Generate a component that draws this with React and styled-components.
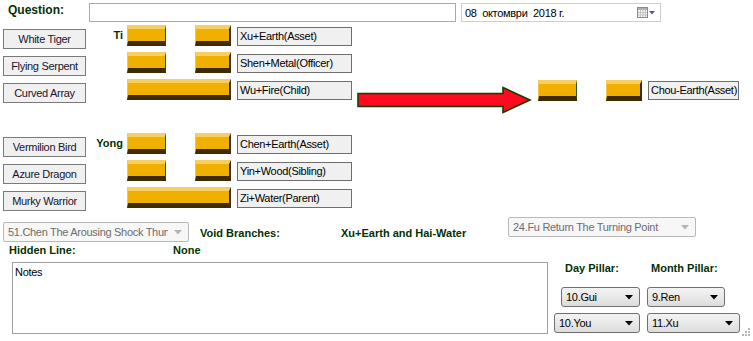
import React from 'react';
import styled, { createGlobalStyle } from 'styled-components';

const GlobalStyle = createGlobalStyle`
  html, body {
    margin: 0;
    padding: 0;
    background: #fff;
  }
  body {
    font-family: "Liberation Sans", Arial, sans-serif;
    font-size: 11px;
    letter-spacing: -0.3px;
    color: #000;
  }
`;

const upper = [
  { name: 'White Tiger', tag: 'Ti', yin: true, reading: 'Xu+Earth(Asset)' },
  { name: 'Flying Serpent', yin: true, reading: 'Shen+Metal(Officer)' },
  { name: 'Curved Array', yin: false, reading: 'Wu+Fire(Child)', moving: { yin: true, reading: 'Chou-Earth(Asset)' } },
];

const lower = [
  { name: 'Vermilion Bird', tag: 'Yong', yin: true, reading: 'Chen+Earth(Asset)' },
  { name: 'Azure Dragon', yin: true, reading: 'Yin+Wood(Sibling)' },
  { name: 'Murky Warrior', yin: false, reading: 'Zi+Water(Parent)' },
];

function Line({ yin }) {
  if (!yin) {
    return (
      <LineBar>
        <Segment $width={104} />
      </LineBar>
    );
  }
  return (
    <LineBar>
      <Segment $width={39} $edge />
      <Segment $width={36} />
    </LineBar>
  );
}

function Arrow() {
  return (
    <ArrowSvg width="175" height="31" viewBox="0 0 175 31">
      <polygon
        points="1,10.5 146,10.5 146,4.5 173,17 146,29.5 146,23.5 1,23.5"
        fill="#ff0a1e"
        stroke="#143c00"
        strokeWidth="1.6"
        strokeLinejoin="miter"
      />
    </ArrowSvg>
  );
}

function DropArrow({ disabled }) {
  return (
    <svg width="8" height="5" viewBox="0 0 8 5">
      <polygon points="0,0 8,0 4,4.5" fill={disabled ? '#b4b4b4' : '#000'} />
    </svg>
  );
}

function Combo({ text, width, disabled, top = 0 }) {
  return (
    <ComboBox $width={width} $disabled={disabled} $top={top}>
      <ComboText>{text}</ComboText>
      <DropArrow disabled={disabled} />
    </ComboBox>
  );
}

function Trigram({ lines, gap }) {
  return (
    <TrigramBlock $gap={gap}>
      {lines.map((l) => (
        <LineRow key={l.name}>
          <SideButton>{l.name}</SideButton>
          <PositionTag>{l.tag || ''}</PositionTag>
          <Line yin={l.yin} />
          <ReadingBox $width={115}>{l.reading}</ReadingBox>
          {l.moving && (
            <>
              <Arrow />
              <MovedLine>
                <Line yin={l.moving.yin} />
              </MovedLine>
              <ReadingBox $width={91}>{l.moving.reading}</ReadingBox>
            </>
          )}
        </LineRow>
      ))}
    </TrigramBlock>
  );
}

export default function App() {
  return (
    <Page>
      <GlobalStyle />
      <TopRow>
        <QuestionLabel>Question:</QuestionLabel>
        <QuestionInput />
        <DatePicker>
          <DateText>08  октомври  2018 г.</DateText>
          <CalendarIcon width="18" height="12" viewBox="0 0 18 12">
            <rect x="0.5" y="0.5" width="10" height="10" fill="#f4f4f4" stroke="#8a8a8a" />
            <rect x="1" y="1" width="9" height="2" fill="#b0b0b0" />
            <path d="M3.5 3v7M6 3v7M8.5 3v7M1 5.5h9M1 8h9" stroke="#c4c4c4" strokeWidth="1" />
            <polygon points="12,4 18,4 15,7.5" fill="#4b5d7e" />
          </CalendarIcon>
        </DatePicker>
      </TopRow>

      <Trigram lines={upper} gap={3} />
      <Trigram lines={lower} gap={27} />

      <InfoRow>
        <Combo text="51.Chen The Arousing Shock Thunder" width={186} disabled top={5} />
        <BoldText $width={141} $pad={11} $top={10}>Void Branches:</BoldText>
        <BoldText $width={167} $top={10}>Xu+Earth and Hai-Water</BoldText>
        <Combo text="24.Fu Return The Turning Point" width={188} disabled />
      </InfoRow>

      <LowerSection>
        <NotesColumn>
          <HiddenRow>
            <BoldText $width={164}>Hidden Line:</BoldText>
            <BoldText>None</BoldText>
          </HiddenRow>
          <Notes>Notes</Notes>
        </NotesColumn>
        <PillarPanel>
          <PillarLabel $pad={11}>Day Pillar:</PillarLabel>
          <PillarLabel $pad={4}>Month Pillar:</PillarLabel>
          <PillarCell $end><Combo text="10.Gui" width={79} /></PillarCell>
          <PillarCell><Combo text="9.Ren" width={78} /></PillarCell>
          <PillarCell $end><Combo text="10.You" width={86} /></PillarCell>
          <PillarCell><Combo text="11.Xu" width={93} /></PillarCell>
        </PillarPanel>
      </LowerSection>

      <SizeGrip width="8" height="8" viewBox="0 0 8 8">
        {[[6, 0], [6, 3], [3, 3], [6, 6], [3, 6], [0, 6]].map(([x, y]) => (
          <rect key={`${x}-${y}`} x={x} y={y} width="2" height="2" fill="#b8b8b8" />
        ))}
      </SizeGrip>
    </Page>
  );
}

const Page = styled.div`
  position: relative;
  width: 753px;
  height: 341px;
  overflow: hidden;
  background: #fff;
`;

const TopRow = styled.div`
  display: flex;
  align-items: flex-start;
  padding-top: 3px;
  height: 19px;
`;

const QuestionLabel = styled.div`
  width: 81px;
  padding-left: 8px;
  font-size: 12px;
  font-weight: bold;
  letter-spacing: 0;
  line-height: 15px;
  color: #053005;
`;

const QuestionInput = styled.div`
  box-sizing: border-box;
  width: 367px;
  height: 19px;
  border: 1px solid #a9a9a9;
  background: #fff;
`;

const DatePicker = styled.div`
  box-sizing: border-box;
  display: flex;
  align-items: center;
  justify-content: space-between;
  width: 200px;
  height: 19px;
  margin-left: 5px;
  padding: 0 5px 0 3px;
  border: 1px solid #cfcfcf;
  background: #fff;
`;

const DateText = styled.span`
  white-space: pre;
  font-size: 11px;
`;

const CalendarIcon = styled.svg`
  display: block;
  margin-top: 1px;
`;

const TrigramBlock = styled.div`
  display: flex;
  flex-direction: column;
  margin-top: ${(p) => p.$gap}px;
`;

const LineRow = styled.div`
  display: flex;
  align-items: flex-start;
  height: 27px;
  padding-left: 3px;
`;

const SideButton = styled.div`
  box-sizing: border-box;
  width: 83px;
  height: 20px;
  margin-top: 4px;
  border: 1px solid #7a7a7a;
  background: #f0f0f0;
  color: #15152e;
  text-align: center;
  line-height: 18px;
  white-space: nowrap;
`;

const PositionTag = styled.div`
  box-sizing: border-box;
  width: 41px;
  padding-right: 4px;
  text-align: right;
  font-weight: bold;
  letter-spacing: 0;
  line-height: 20px;
  color: #053005;
`;

const LineBar = styled.div`
  display: flex;
  justify-content: space-between;
  width: 104px;
  height: 21px;
`;

const Segment = styled.div`
  box-sizing: border-box;
  width: ${(p) => p.$width}px;
  height: 21px;
  background: #f0b000;
  border-top: 4px solid #f6cf62;
  border-left: 1px solid #f3c445;
  border-bottom: 5px solid #3d2c00;
  border-right: ${(p) => (p.$edge ? '1px solid #1f5a0c' : '2px solid #3d2c00')};
`;

const ReadingBox = styled.div`
  box-sizing: border-box;
  width: ${(p) => p.$width}px;
  height: 19px;
  margin: 2px 0 0 6px;
  padding-left: 2px;
  border: 1px solid #6e6e6e;
  background: #f0f0f0;
  line-height: 17px;
  white-space: nowrap;
  overflow: hidden;
`;

const ArrowSvg = styled.svg`
  display: block;
  margin: 4px 0 0 5px;
`;

const MovedLine = styled.div`
  margin: 1px 0 0 6px;
`;

const InfoRow = styled.div`
  display: flex;
  align-items: flex-start;
  height: 25px;
  margin-top: 3px;
  padding-left: 3px;
`;

const ComboBox = styled.div`
  box-sizing: border-box;
  display: flex;
  align-items: center;
  justify-content: space-between;
  width: ${(p) => p.$width}px;
  height: 20px;
  margin-top: ${(p) => p.$top}px;
  padding: 0 6px 0 4px;
  border: 1px solid ${(p) => (p.$disabled ? '#b9b9b9' : '#707070')};
  border-radius: ${(p) => (p.$disabled ? 2 : 3)}px;
  background: ${(p) =>
    p.$disabled ? '#f7f7f7' : 'linear-gradient(#f3f3f3, #e9e9e9 50%, #dcdcdc)'};
  color: ${(p) => (p.$disabled ? '#6d6d6d' : '#000')};
  gap: 6px;
`;

const ComboText = styled.span`
  flex: 1;
  overflow: hidden;
  white-space: nowrap;
  line-height: 18px;
`;

const BoldText = styled.div`
  box-sizing: border-box;
  ${(p) => (p.$width ? `width: ${p.$width}px;` : '')}
  margin-left: ${(p) => p.$pad || 0}px;
  padding-top: ${(p) => p.$top || 0}px;
  font-weight: bold;
  letter-spacing: 0;
  line-height: 13px;
  color: #053005;
  white-space: nowrap;
`;

const LowerSection = styled.div`
  display: flex;
  align-items: flex-start;
`;

const NotesColumn = styled.div`
  display: flex;
  flex-direction: column;
  width: 548px;
`;

const HiddenRow = styled.div`
  box-sizing: border-box;
  display: flex;
  height: 20px;
  padding: 2px 0 0 9px;
`;

const Notes = styled.div`
  box-sizing: border-box;
  width: 536px;
  height: 72px;
  margin-left: 12px;
  padding: 3px 2px;
  border: 1px solid #a0a0a0;
  background: #fff;
  line-height: 13px;
  color: #000;
`;

const PillarPanel = styled.div`
  display: grid;
  grid-template-columns: 86px 93px;
  grid-template-rows: 25px 26px 20px;
  column-gap: 7px;
  margin-left: 6px;
  padding-top: 20px;
`;

const PillarLabel = styled.div`
  padding-left: ${(p) => p.$pad}px;
  font-weight: bold;
  letter-spacing: 0;
  line-height: 13px;
  color: #053005;
  white-space: nowrap;
`;

const PillarCell = styled.div`
  display: flex;
  justify-content: ${(p) => (p.$end ? 'flex-end' : 'flex-start')};
`;

const SizeGrip = styled.svg`
  position: absolute;
  right: 3px;
  bottom: 5px;
`;
